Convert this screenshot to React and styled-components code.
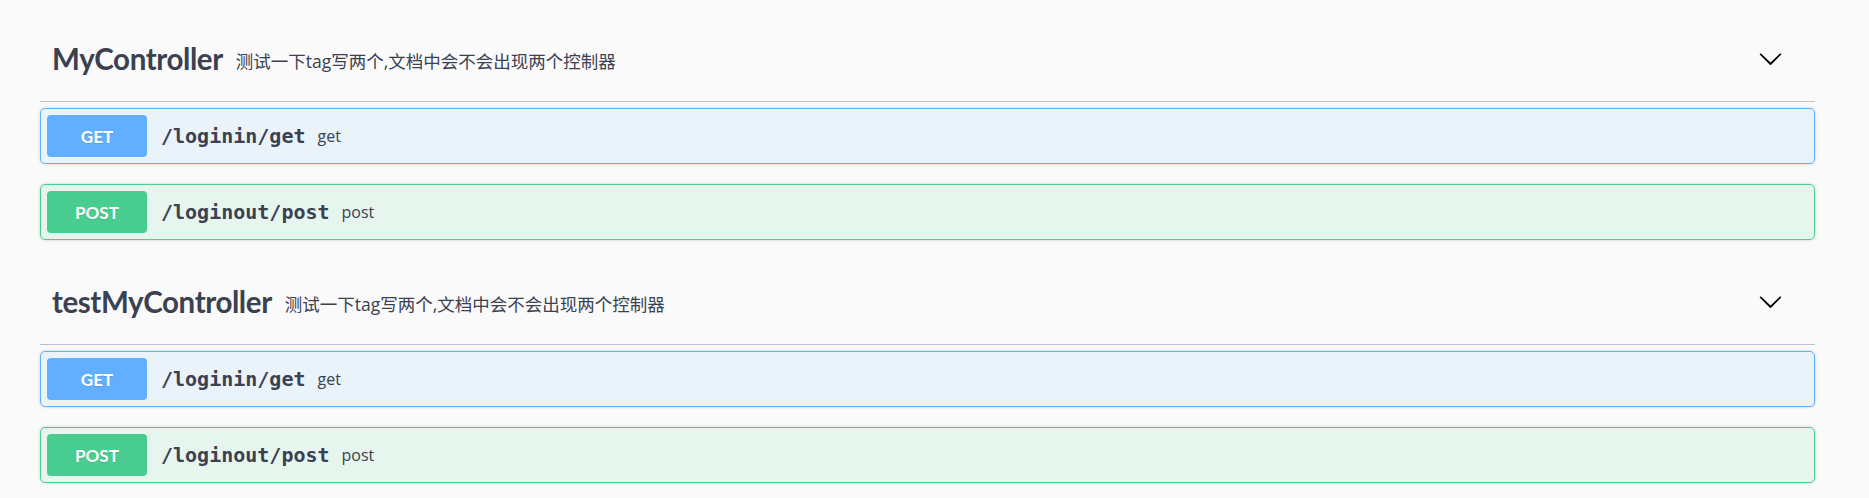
import React from 'react'
import styled, { createGlobalStyle } from 'styled-components'

const GlobalStyle = createGlobalStyle`
  html, body {
    margin: 0;
    padding: 0;
    background: #fafafa;
  }
  body {
    font-family: "Open Sans", "Noto Sans CJK SC", sans-serif;
    color: #3b4151;
  }
`

const methodColors = {
  get: { main: '#61affe', bg: 'rgba(97, 175, 254, 0.1)' },
  post: { main: '#49cc90', bg: 'rgba(73, 204, 144, 0.1)' },
}

const sections = [
  {
    name: 'MyController',
    desc: '测试一下tag写两个,文档中会不会出现两个控制器',
    ops: [
      { method: 'get', path: '/loginin/get', summary: 'get' },
      { method: 'post', path: '/loginout/post', summary: 'post' },
    ],
  },
  {
    name: 'testMyController',
    desc: '测试一下tag写两个,文档中会不会出现两个控制器',
    ops: [
      { method: 'get', path: '/loginin/get', summary: 'get' },
      { method: 'post', path: '/loginout/post', summary: 'post' },
    ],
  },
]

const ChevronDown = () => (
  <svg width="25" height="25" viewBox="0 0 20 20" aria-hidden="true">
    <path
      fill="#000"
      d="M17.418 6.109c.272-.268.709-.268.979 0s.271.701 0 .969l-7.908 7.83c-.27.268-.707.268-.979 0l-7.908-7.83c-.27-.268-.27-.701 0-.969.271-.268.709-.268.979 0L10 13.25l7.418-7.141z"
    />
  </svg>
)

const App = () => {
  return (
    <>
      <GlobalStyle />
      <Wrapper>
        {sections.map((section) => (
          <TagSection key={section.name}>
            <TagHeader>
              <TagName>{section.name}</TagName>
              <TagDesc>{section.desc}</TagDesc>
              <ExpandButton>
                <ChevronDown />
              </ExpandButton>
            </TagHeader>
            <Operations>
              {section.ops.map((op) => (
                <OpBlock key={op.method + op.path} $method={op.method}>
                  <MethodBadge $method={op.method}>{op.method.toUpperCase()}</MethodBadge>
                  <OpPath>{op.path}</OpPath>
                  <OpSummary>{op.summary}</OpSummary>
                </OpBlock>
              ))}
            </Operations>
          </TagSection>
        ))}
      </Wrapper>
    </>
  )
}

const Wrapper = styled.div`
  padding: 15px 54px 0 40px;
`

const TagSection = styled.div`
  display: flex;
  flex-direction: column;
`

const TagHeader = styled.div`
  display: flex;
  align-items: center;
  box-sizing: border-box;
  height: 87px;
  padding: 1px 32px 0 12px;
  border-bottom: 1px solid rgba(59, 65, 81, 0.3);
  margin-bottom: 6px;
`

const TagName = styled.h4`
  margin: 0;
  font-family: Lato, "Open Sans", sans-serif;
  font-size: 29.5px;
  font-weight: 700;
  letter-spacing: -0.4px;
  color: #3b4151;
`

const TagDesc = styled.small`
  flex: 1;
  padding: 4px 12px 0 13px;
  font-family: "Open Sans", "Noto Sans CJK SC", sans-serif;
  font-size: 17.5px;
  color: #3b4151;
`

const ExpandButton = styled.button`
  display: flex;
  align-items: center;
  padding: 0;
  border: none;
  background: none;
  cursor: pointer;
`

const Operations = styled.div`
  display: flex;
  flex-direction: column;
  gap: 20px;
  padding-bottom: 18px;
`

const OpBlock = styled.div`
  display: flex;
  align-items: center;
  box-sizing: border-box;
  height: 56px;
  padding: 0 6px;
  border: 1px solid ${(p) => methodColors[p.$method].main};
  border-radius: 5px;
  background: ${(p) => methodColors[p.$method].bg};
  box-shadow: 0 0 3px rgba(0, 0, 0, 0.19);
`

const MethodBadge = styled.span`
  display: flex;
  align-items: center;
  justify-content: center;
  width: 100px;
  height: 42px;
  border-radius: 4px;
  background: ${(p) => methodColors[p.$method].main};
  color: #fff;
  font-family: Lato, "Open Sans", sans-serif;
  font-size: 17px;
  font-weight: 700;
  text-shadow: 0 1px 0 rgba(0, 0, 0, 0.1);
`

const OpPath = styled.span`
  padding: 0 12px 0 14px;
  font-family: "DejaVu Sans Mono", "Liberation Mono", monospace;
  font-size: 20px;
  font-weight: 700;
  color: #3b4151;
`

const OpSummary = styled.div`
  flex: 1;
  font-family: "Open Sans", sans-serif;
  font-size: 16px;
  color: #3b4151;
`

export default App
